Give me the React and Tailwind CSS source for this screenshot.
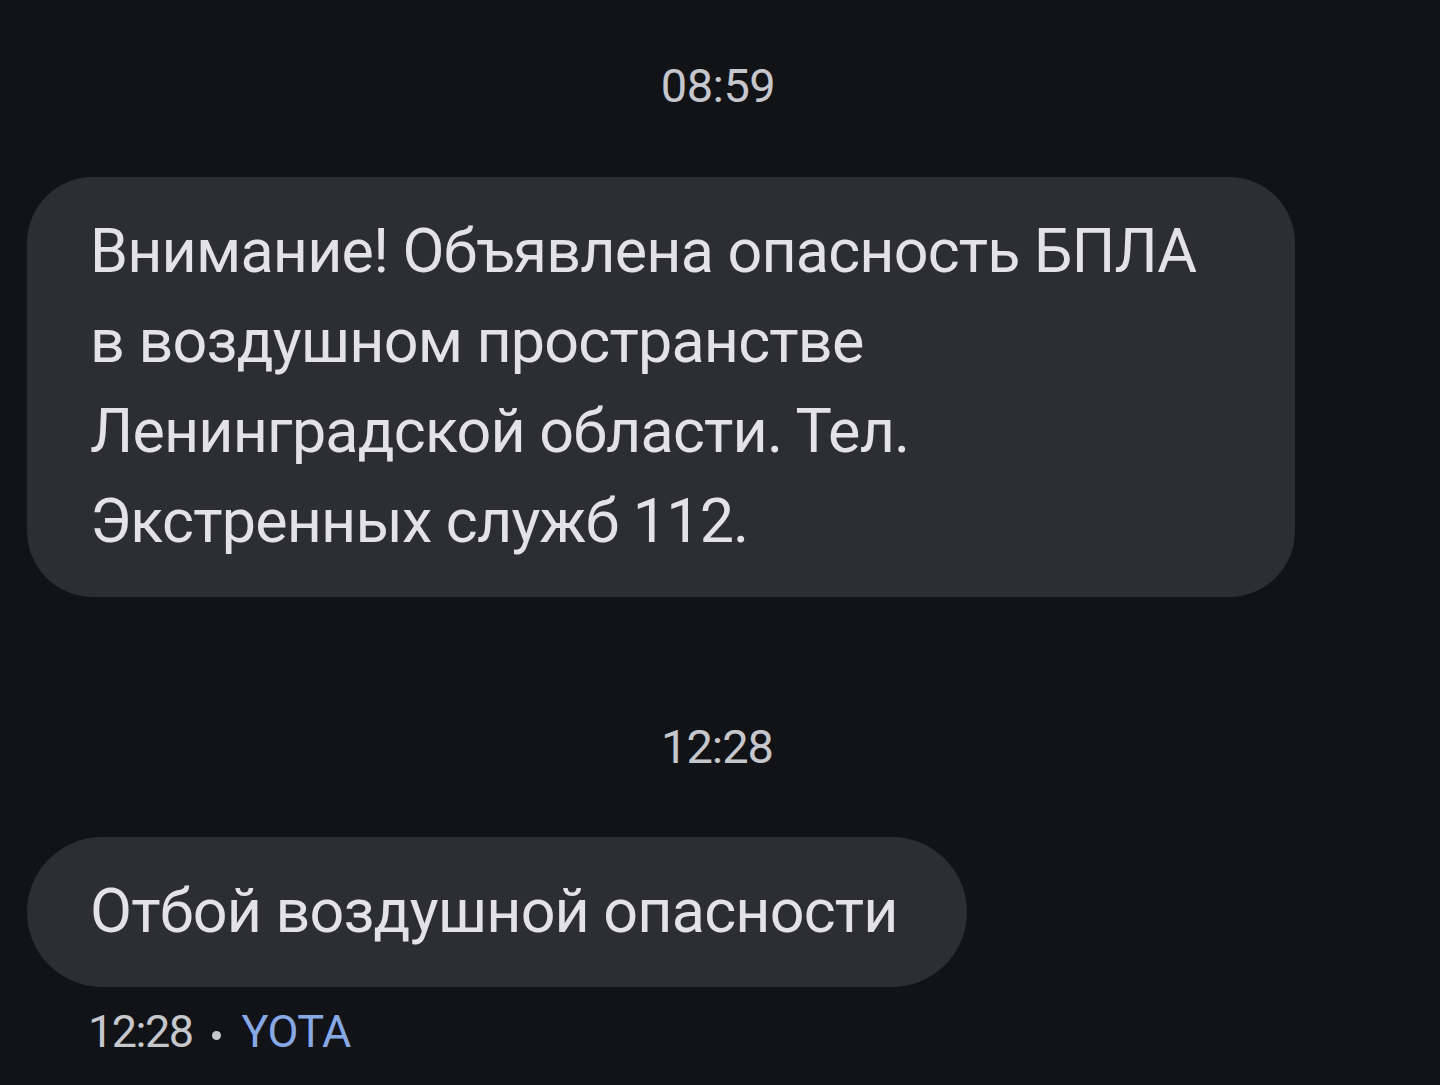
export default function App() {
  return (
    <div
      className="min-h-screen w-full bg-[#121317] pt-[60px] text-[#e3e3e7]"
      style={{ fontFamily: "Roboto, 'Noto Sans', sans-serif" }}
    >
      <div className="flex h-[52px] items-center justify-center pr-[4px] text-[47px] leading-[52px] tracking-[-0.5px] text-[#c6c7cc]">
        08:59
      </div>
      <div className="mt-[65px] pl-[27px]">
        <div className="w-[1268px] rounded-[66px] bg-[#2d2e32] pl-[63px] pr-[40px] pt-[29px] pb-[31px] text-[61px] leading-[90px] tracking-[-0.8px]">
          Внимание! Объявлена опасность БПЛА
          <br />в воздушном пространстве
          <br />Ленинградской области. Тел.
          <br />Экстренных служб 112.
        </div>
      </div>
      <div className="mt-[124px] flex h-[52px] items-center justify-center pr-[6px] text-[47px] leading-[52px] tracking-[-1px] text-[#c6c7cc]">
        12:28
      </div>
      <div className="mt-[64px] pl-[27px]">
        <div className="flex h-[150px] w-[940px] items-center rounded-full bg-[#2d2e32] pl-[63px] text-[61px] tracking-[-0.8px]">
          Отбой воздушной опасности
        </div>
      </div>
      <div className="mt-[19px] flex h-[52px] items-center pl-[88px] text-[45px] leading-[52px] tracking-[-1.5px]">
        <span className="text-[#c6c7cc]">12:28</span>
        <span className="ml-[19px] mr-[21px] mt-[6px] h-[9px] w-[9px] rounded-full bg-[#c6c7cc]"></span>
        <span className="tracking-[-0.5px] text-[#86a9e6]">YOTA</span>
      </div>
    </div>
  );
}
